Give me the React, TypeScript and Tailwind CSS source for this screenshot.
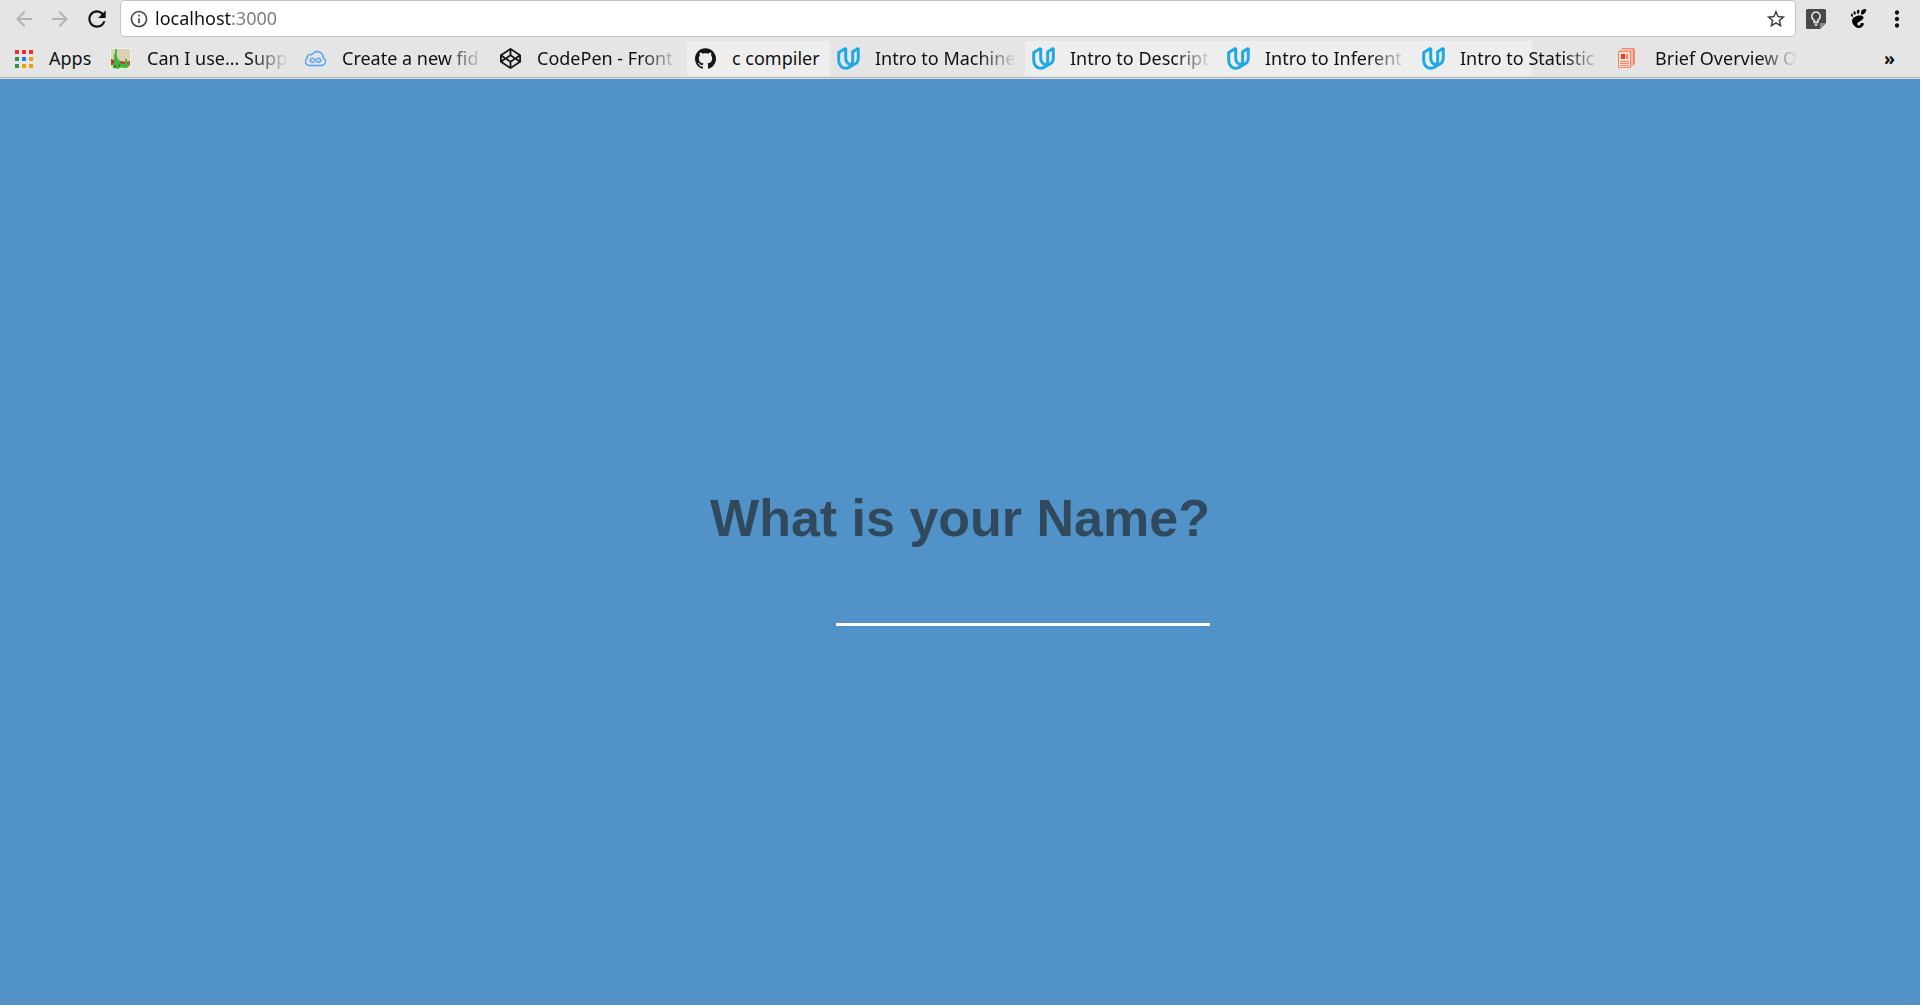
import React from "react";
import { MdArrowBack, MdArrowForward, MdRefresh, MdInfoOutline, MdStarBorder, MdMoreVert } from "react-icons/md";
import { FaCodepen } from "react-icons/fa";
import { SiGithub, SiGnome, SiJsfiddle, SiUdacity } from "react-icons/si";

function AppsIcon() {
  const colors = ["#ee2b34", "#ee2b34", "#ee2b34", "#2a9648", "#1a7cf2", "#f49b0b", "#2a9648", "#f49b0b", "#f49b0b"];
  return (
    <svg viewBox="0 0 18 18" className="size-[18px] shrink-0" shapeRendering="crispEdges" aria-hidden="true">
      {colors.map((c, i) => (
        <rect key={i} x={(i % 3) * 7} y={Math.floor(i / 3) * 7} width="4" height="4" fill={c} />
      ))}
    </svg>
  );
}

function CanIUseIcon() {
  return (
    <svg viewBox="0 0 21 21" className="size-[21px] shrink-0" aria-hidden="true">
      <rect width="21" height="21" fill="#f2f0ea" />
      <rect x="1" y="1" width="19" height="19" fill="#ddd0b8" />
      <path d="M1 11l3 1 3 2 5-1 3 1 5-1v4H1z" fill="#c5342b" />
      <path d="M3 20v-3l-1-2 2 1V6h1V1h2v8l1 2 1 2 1-2v4l3 1v-1l2 2v-6h2v5l2-3v5l-2 2h-4l-1-1-3 1v1z" fill="#42b83b" />
      <path d="M4 17h2v3H4zM8 15l2 2v2H8z" fill="#2a8f27" />
    </svg>
  );
}

function NewsIcon() {
  return (
    <svg viewBox="0 0 21 21" className="size-[21px] shrink-0" aria-hidden="true">
      <path d="M4 0h11a2 2 0 0 1 2 2v14l-2 2V2H4z" fill="#f08a6c" />
      <path d="M2 1h12l1 1v15l-2 2V3H2z" fill="#f6b7a3" />
      <rect x="0" y="3" width="13" height="17" fill="#ee8a6c" />
      <rect x="1" y="4" width="11" height="15" fill="#fadcd2" />
      <path d="M3 6h4v5H3z" fill="#e5401a" />
      <path d="M8 6h2v5H8zM2 13h9v1H2zM2 15h9v1H2zM2 17h9v1H2z" fill="#ee8a6c" />
    </svg>
  );
}

function KeepIcon() {
  return (
    <svg viewBox="0 0 20 20" className="size-5" aria-hidden="true">
      <path d="M1.500 0h17A1.500 1.500 0 0 1 20 1.500V14l-6 6H1.500A1.500 1.500 0 0 1 0 18.500v-17A1.500 1.500 0 0 1 1.500 0z" fill="#484848" />
      <path d="M14 20v-6h6z" fill="#8c8c8c" />
      <path d="M8 13v-2a4.200 4.200 0 1 1 4 0v2z" fill="none" stroke="#f2f2f2" strokeWidth="1.500" />
      <path d="M8 15h4M9 16.500h2" fill="none" stroke="#f2f2f2" strokeWidth="1" />
    </svg>
  );
}

type Bookmark = { label: string; icon: React.ReactNode; width: string; tone?: string };

const udacity = (
  <SiUdacity className="size-[21px] shrink-0 overflow-visible text-[#1fa9e4]" stroke="currentColor" strokeWidth="1.8" aria-hidden="true" />
);

const bookmarks: Bookmark[] = [
  { label: "Can I use... Supp", icon: <CanIUseIcon />, width: "w-[195px]" },
  {
    label: "Create a new fid",
    icon: <SiJsfiddle className="size-[21px] shrink-0 text-[#4a9cf6]" stroke="currentColor" strokeWidth="0.8" aria-hidden="true" />,
    width: "w-[195px]",
  },
  { label: "CodePen - Front", icon: <FaCodepen className="size-[21px] shrink-0 text-[#151515]" aria-hidden="true" />, width: "w-[195px]" },
  { label: "c compiler", icon: <SiGithub className="size-[21px] shrink-0 text-[#151515]" aria-hidden="true" />, width: "w-[143px]", tone: "bg-[#eeeeee]" },
  { label: "Intro to Machine", icon: udacity, width: "w-[195px]" },
  { label: "Intro to Descript", icon: udacity, width: "w-[195px]", tone: "bg-[#eeeeee]" },
  { label: "Intro to Inferent", icon: udacity, width: "w-[195px]", tone: "bg-[#eeeeee]" },
  { label: "Intro to Statistic", icon: udacity, width: "w-[195px]", tone: "bg-linear-to-r from-[#eeeeee] from-60% to-transparent to-60%" },
  { label: "Brief Overview O", icon: <NewsIcon />, width: "w-[195px]" },
];

export default function App() {
  return (
    <div className="flex min-h-screen flex-col bg-white pr-[3px] pb-[3px]">
      <header className="border-b border-[#b4b4b4] bg-[#e5e5e5] font-['Noto_Sans',sans-serif] text-[18px] text-[#111111]">
        <div className="flex h-[37px] items-stretch">
          <nav className="flex w-[120px] shrink-0 items-center gap-3 pl-3" aria-label="History">
            <button aria-label="Back" className="text-[#b3b3b3]"><MdArrowBack className="size-6" /></button>
            <button aria-label="Forward" className="text-[#b3b3b3]"><MdArrowForward className="size-6" /></button>
            <button aria-label="Reload"><MdRefresh className="size-[26px]" /></button>
          </nav>
          <div className="flex flex-1 items-center gap-1.5 rounded-sm border border-[#c4c4c4] bg-white px-2">
            <MdInfoOutline className="size-5 shrink-0 text-[#484848]" aria-hidden="true" />
            <input
              aria-label="Address"
              defaultValue="localhost:3000"
              className="min-w-0 flex-1 bg-linear-to-r from-[#111111] from-[76px] to-[#7a7a7a] to-[76px] bg-clip-text text-[18px] text-transparent outline-none"
            />
            <button aria-label="Bookmark this page" className="text-[#3c3c3c]">
              <MdStarBorder className="size-[22px]" />
            </button>
          </div>
          <div className="flex w-[124px] shrink-0 items-center pl-[10px]">
            <button aria-label="Notes"><KeepIcon /></button>
            <button aria-label="GNOME extensions" className="ml-[23px] text-black"><SiGnome className="size-[19px]" /></button>
            <button aria-label="Menu" className="ml-4"><MdMoreVert className="size-[26px]" /></button>
          </div>
        </div>
        <nav className="flex h-10 items-end pb-px pl-[7px]" aria-label="Bookmarks">
          <a href="#apps" className="flex h-[35px] w-[95px] shrink-0 items-center gap-4 pl-2">
            <AppsIcon />
            Apps
          </a>
          {bookmarks.map((b) => (
            <a key={b.label} href="#bookmark" className={`flex h-[35px] shrink-0 items-center gap-4 px-2 ${b.width} ${b.tone ?? ""}`}>
              {b.icon}
              <span className={`min-w-0 flex-1 whitespace-nowrap ${b.label === "c compiler" ? "" : "mask-r-from-[104px] mask-r-to-100%"}`}>
                {b.label}
              </span>
            </a>
          ))}
          <button aria-label="More bookmarks" className="mr-[25px] ml-auto h-[35px] font-bold">»</button>
        </nav>
      </header>
      <main className="flex flex-1 flex-col items-center justify-center border-t border-[#dcdcdc] bg-[#5193c8] pt-[30px] font-['Liberation_Sans',Arial,sans-serif]">
        <div className="flex flex-col items-end">
          <label htmlFor="name" className="text-[52px] leading-[60px] font-bold text-[#30495c]">What is your Name?</label>
          <input id="name" className="mt-6 h-[54px] w-[374px] border-b-[3px] border-white text-[36px] text-white outline-none" />
        </div>
      </main>
    </div>
  );
}
